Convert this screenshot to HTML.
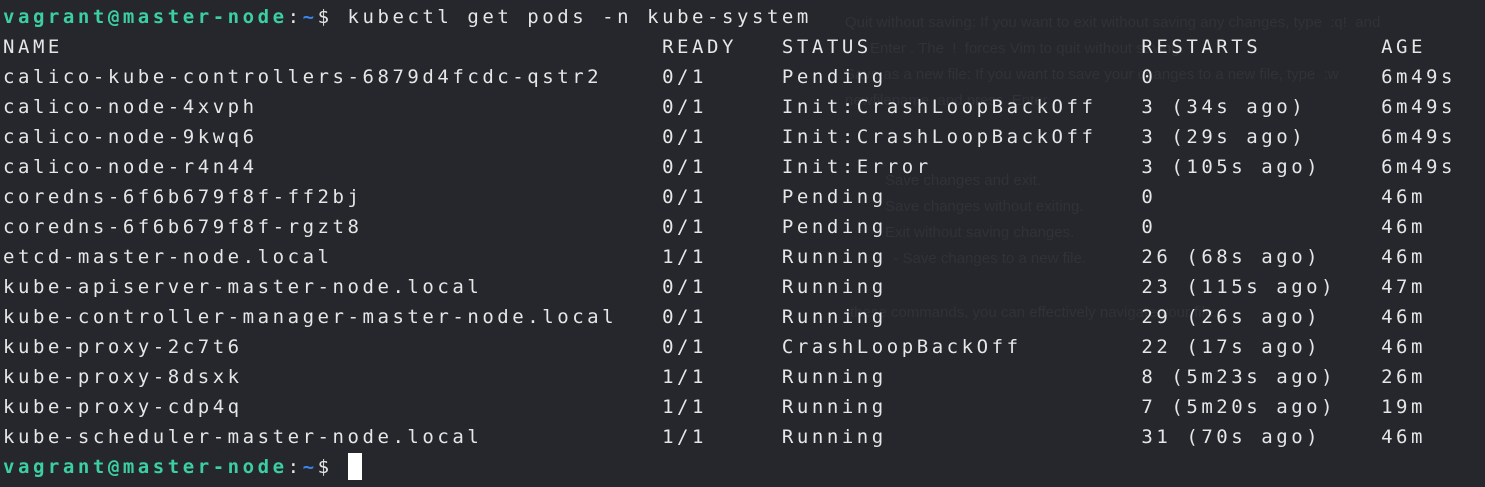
<!DOCTYPE html>
<html><head><meta charset="utf-8"><style>
html,body{margin:0;padding:0;background:#25272c;width:1485px;height:487px;overflow:hidden}
.bg{position:absolute;left:845px;top:0;font-family:"Liberation Sans",sans-serif;font-size:15px;color:#2f3237;line-height:26px;white-space:pre}
pre{position:absolute;left:3px;top:2px;margin:0;font-family:"DejaVu Sans Mono",monospace;font-size:19px;letter-spacing:3.54px;line-height:30px;color:#e6e6e6;white-space:pre}
.g{color:#3ccfa2;font-weight:bold}.b{color:#3a86e8;font-weight:bold}
.cur{display:inline-block;width:14px;height:27px;background:#fff;vertical-align:-7px}
</style></head><body>
<div class="bg" style="top:10px">Quit without saving: If you want to exit without saving any changes, type  :q!  and
      Enter . The  !  forces Vim to quit without saving.
Save as a new file: If you want to save your changes to a new file, type  :w
newfilename  and press  Enter .</div>
<div class="bg" style="top:168px;left:885px">Save changes and exit.
Save changes without exiting.
Exit without saving changes.
  - Save changes to a new file.</div>
<div class="bg" style="top:300px;left:850px">these commands, you can effectively navigate your file.</div>
<pre><span class="g">vagrant@master-node</span>:<span class="b">~</span>$ kubectl get pods -n kube-system
NAME                                        READY   STATUS                  RESTARTS        AGE
calico-kube-controllers-6879d4fcdc-qstr2    0/1     Pending                 0               6m49s
calico-node-4xvph                           0/1     Init:CrashLoopBackOff   3 (34s ago)     6m49s
calico-node-9kwq6                           0/1     Init:CrashLoopBackOff   3 (29s ago)     6m49s
calico-node-r4n44                           0/1     Init:Error              3 (105s ago)    6m49s
coredns-6f6b679f8f-ff2bj                    0/1     Pending                 0               46m
coredns-6f6b679f8f-rgzt8                    0/1     Pending                 0               46m
etcd-master-node.local                      1/1     Running                 26 (68s ago)    46m
kube-apiserver-master-node.local            0/1     Running                 23 (115s ago)   47m
kube-controller-manager-master-node.local   0/1     Running                 29 (26s ago)    46m
kube-proxy-2c7t6                            0/1     CrashLoopBackOff        22 (17s ago)    46m
kube-proxy-8dsxk                            1/1     Running                 8 (5m23s ago)   26m
kube-proxy-cdp4q                            1/1     Running                 7 (5m20s ago)   19m
kube-scheduler-master-node.local            1/1     Running                 31 (70s ago)    46m
<span class="g">vagrant@master-node</span>:<span class="b">~</span>$ <span class="cur"></span></pre>
</body></html>
